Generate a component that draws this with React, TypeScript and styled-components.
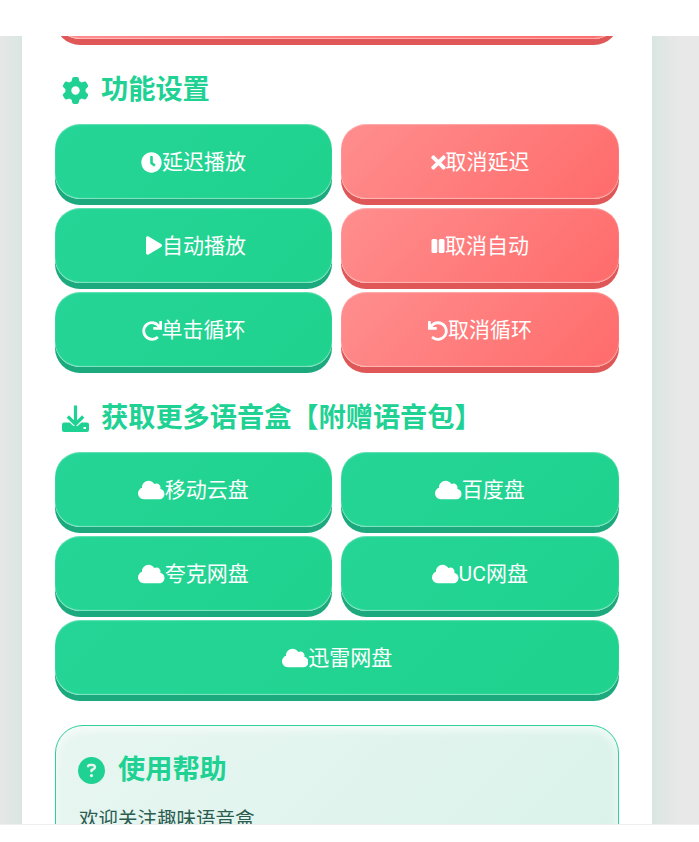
import styled, { createGlobalStyle } from "styled-components";
import type { ReactNode } from "react";
import {
  FaClock,
  FaCloud,
  FaPlay,
  FaRedo,
  FaTimes,
  FaUndo,
} from "react-icons/fa";
import { FaCircleQuestion, FaGear } from "react-icons/fa6";

const GlobalStyle = createGlobalStyle`
  html, body {
    margin: 0;
    padding: 0;
    height: 100%;
    background: #fff;
    overflow: hidden;
  }
  * {
    box-sizing: border-box;
  }
`;

const Page = styled.div`
  height: 842px;
  display: flex;
  flex-direction: column;
  font-family: Roboto, "Noto Sans CJK SC", sans-serif;
`;
const TopBar = styled.div`
  height: 36px;
  flex: none;
  background: #fff;
`;
const BottomBar = styled.div`
  height: 18px;
  flex: none;
  background: #fff;
  border-top: 1px solid #efefef;
`;
const Viewport = styled.div`
  flex: 1;
  min-height: 0;
  overflow: hidden;
  background: #e8e8e8;
  padding-left: 22px;
`;
const Card = styled.div`
  width: 630px;
  padding: 0 33px;
  background: #fff;
  box-shadow: 0 0 30px rgba(29, 209, 145, 0.15);
  min-height: 100%;
`;
const ScrolledOff = styled.div`
  margin-top: -72px;
  display: grid;
`;
const Section = styled.div`
  margin-top: 29px;
`;
const Heading = styled.h2`
  margin: 0;
  height: 44px;
  padding-left: 7px;
  display: flex;
  align-items: center;
  gap: 12px;
  color: #20d194;
  font-size: 27.2px;
  font-weight: 700;
  line-height: 44px;
  svg {
    width: 27px;
    height: 27px;
    flex: none;
  }
`;
const ButtonGrid = styled.div`
  display: grid;
  grid-template-columns: 277px 278px;
  column-gap: 9px;
  row-gap: 9px;
  margin-top: 12px;
`;
const Button = styled.button<{ $tone: "green" | "red"; $wide?: boolean }>`
  height: 75px;
  margin: 0;
  padding: 2px 0 0;
  border: 0;
  border-radius: 25px;
  display: flex;
  align-items: center;
  justify-content: center;
  grid-column: ${(p) => (p.$wide ? "1 / -1" : "auto")};
  color: #fff;
  font-family: inherit;
  font-size: 21px;
  line-height: 1;
  background: ${(p) =>
    p.$tone === "green"
      ? "linear-gradient(135deg, #25d597, #1fd28d)"
      : "linear-gradient(135deg, #ff8e8e, #ff6b6b)"};
  box-shadow: 0 6px 0
      ${(p) => (p.$tone === "green" ? "#1ba97d" : "#e05757")},
    inset 0 1px 1px rgba(255, 255, 255, 0.3),
    inset 0 -1px 1px rgba(255, 255, 255, 0.45);
`;
const HelpBox = styled.div`
  margin-top: 30px;
  height: 200px;
  padding: 22px 23px;
  border: 1px solid #2fd09a;
  border-radius: 28px;
  background: linear-gradient(135deg, #e8f6f1, #d8f2e9);
  box-shadow: inset 0 4px 10px rgba(255, 255, 255, 0.7);
`;
const HelpHeading = styled(Heading)`
  padding-left: 0;
  margin-left: -1px;
  gap: 13px;
`;
const HelpText = styled.p`
  margin: 14px 0 0;
  color: #2c5c50;
  font-size: 19.5px;
  line-height: 28px;
`;

const ClockIcon = styled(FaClock)`
  width: 21px;
  height: 21px;
  flex: none;
`;
const XmarkIcon = styled(FaTimes)`
  width: 15px;
  height: 21px;
  flex: none;
`;
const PlayIcon = styled(FaPlay)`
  width: 16px;
  height: 19px;
  margin-left: 5px;
  margin-bottom: 2px;
  flex: none;
`;
const PauseSvg = styled.svg`
  width: 14px;
  height: 16px;
  margin-bottom: 2px;
  flex: none;
`;
const RedoIcon = styled(FaRedo)`
  width: 20px;
  height: 20px;
  flex: none;
`;
const UndoIcon = styled(FaUndo)`
  width: 20px;
  height: 20px;
  flex: none;
`;
const CloudIcon = styled(FaCloud)`
  width: 26.5px;
  height: 24px;
  margin-bottom: 2px;
  flex: none;
`;

function PauseIcon() {
  return (
    <PauseSvg viewBox="0 0 14 16" fill="currentColor">
      <rect x="0.5" y="1" width="5.8" height="14" rx="1.6" />
      <rect x="7.7" y="1" width="5.8" height="14" rx="1.6" />
    </PauseSvg>
  );
}

function DownloadIcon() {
  return (
    <svg viewBox="0 0 27 27" fill="currentColor">
      <path
        d="M13.5 0.5v17M5.8 11.5l7.7 7.7 7.7-7.7"
        fill="none"
        stroke="currentColor"
        strokeWidth="3.2"
      />
      <path
        fillRule="evenodd"
        d="M2 17.5h5.5l4 3.6h4l4-3.6H25a2 2 0 0 1 2 2V25a2 2 0 0 1-2 2H2a2 2 0 0 1-2-2V19.5a2 2 0 0 1 2-2zM21.5 22v2h2.5v-2z"
      />
    </svg>
  );
}

type ActionProps = {
  tone: "green" | "red";
  icon: ReactNode;
  label: string;
  wide?: boolean;
};

function Action({ tone, icon, label, wide }: ActionProps) {
  return (
    <Button $tone={tone} $wide={wide}>
      {icon}
      {label}
    </Button>
  );
}

export default function App() {
  return (
    <Page>
      <GlobalStyle />
      <TopBar />
      <Viewport>
        <Card>
          <ScrolledOff>
            <Action tone="red" icon={null} label="" />
          </ScrolledOff>
          <Section>
            <Heading>
              <FaGear />
              功能设置
            </Heading>
            <ButtonGrid>
              <Action tone="green" icon={<ClockIcon />} label="延迟播放" />
              <Action tone="red" icon={<XmarkIcon />} label="取消延迟" />
              <Action tone="green" icon={<PlayIcon />} label="自动播放" />
              <Action tone="red" icon={<PauseIcon />} label="取消自动" />
              <Action tone="green" icon={<RedoIcon />} label="单击循环" />
              <Action tone="red" icon={<UndoIcon />} label="取消循环" />
            </ButtonGrid>
          </Section>
          <Section>
            <Heading>
              <DownloadIcon />
              获取更多语音盒【附赠语音包】
            </Heading>
            <ButtonGrid>
              <Action tone="green" icon={<CloudIcon />} label="移动云盘" />
              <Action tone="green" icon={<CloudIcon />} label="百度盘" />
              <Action tone="green" icon={<CloudIcon />} label="夸克网盘" />
              <Action tone="green" icon={<CloudIcon />} label="UC网盘" />
              <Action tone="green" icon={<CloudIcon />} label="迅雷网盘" wide />
            </ButtonGrid>
          </Section>
          <HelpBox>
            <HelpHeading>
              <FaCircleQuestion />
              使用帮助
            </HelpHeading>
            <HelpText>欢迎关注趣味语音盒</HelpText>
          </HelpBox>
        </Card>
      </Viewport>
      <BottomBar />
    </Page>
  );
}
